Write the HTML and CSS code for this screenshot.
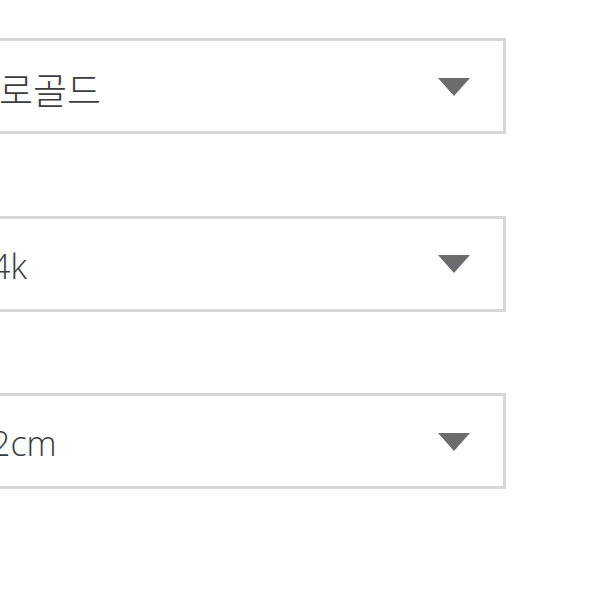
FILE: index.html
```html
<!DOCTYPE html>
<html lang="ko">
<head>
<meta charset="utf-8">
<title>옵션 선택</title>
<link rel="stylesheet" href="styles.css">
</head>
<body>
<div class="list">
  <div class="select select-ko">
    <span class="value">로골드</span>
    <svg class="arrow" width="32" height="18" viewBox="0 0 32 18"><polygon points="0,0 32,0 16,18" fill="#6b6b70"/></svg>
  </div>
  <div class="select">
    <span class="value">4k</span>
    <svg class="arrow" width="32" height="18" viewBox="0 0 32 18"><polygon points="0,0 32,0 16,18" fill="#6b6b70"/></svg>
  </div>
  <div class="select">
    <span class="value">2cm</span>
    <svg class="arrow" width="32" height="18" viewBox="0 0 32 18"><polygon points="0,0 32,0 16,18" fill="#6b6b70"/></svg>
  </div>
</div>
</body>
</html>
```
FILE: styles.css
```css
html, body {
  margin: 0;
  padding: 0;
  background: #ffffff;
  overflow: hidden;
}
.list {
  display: flex;
  flex-direction: column;
  gap: 81.5px;
  padding-top: 38px;
  margin-left: -40px;
  width: 546px;
}
.select {
  box-sizing: border-box;
  height: 96px;
  border: 3px solid #d7d7d7;
  display: flex;
  align-items: center;
  justify-content: space-between;
  padding-left: 28px;
  padding-right: 33px;
  background: #fff;
}
.value {
  font-family: "Open Sans", "Noto Sans CJK KR", sans-serif;
  font-weight: 300;
  font-size: 34px;
  color: #3c3c3c;
  padding-top: 4px;
}
.select-ko .value {
  font-family: "Noto Sans CJK KR", sans-serif;
  font-weight: 300;
  font-size: 37px;
  padding-left: 8px;
  padding-top: 6px;
}
.arrow {
  display: block;
  margin-top: 1px;
}
```
